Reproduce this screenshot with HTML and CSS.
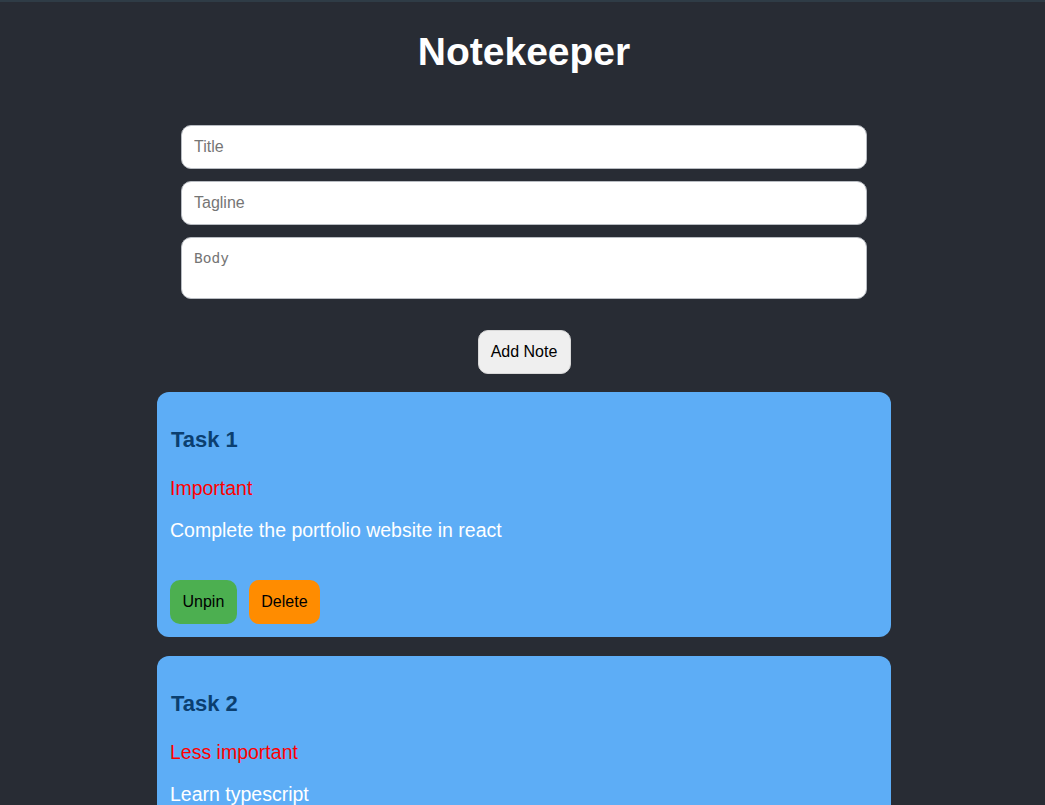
FILE: index.html
```html
<!DOCTYPE html>
<html>
<head>
<meta charset="utf-8">
<title>Notekeeper</title>
<link rel="stylesheet" href="styles.css">
</head>
<body>
<div class="app">
  <h1 class="app-title">Notekeeper</h1>
  <form class="note-form">
    <input class="field" type="text" placeholder="Title">
    <input class="field" type="text" placeholder="Tagline">
    <textarea class="field field-body" placeholder="Body"></textarea>
    <button class="btn btn-add" type="button">Add Note</button>
  </form>
  <div class="notes">
    <div class="note">
      <h3 class="note-title">Task 1</h3>
      <p class="note-tag">Important</p>
      <p class="note-body">Complete the portfolio website in react</p>
      <div class="note-actions">
        <button class="btn btn-pin" type="button">Unpin</button>
        <button class="btn btn-delete" type="button">Delete</button>
      </div>
    </div>
    <div class="note">
      <h3 class="note-title">Task 2</h3>
      <p class="note-tag">Less important</p>
      <p class="note-body">Learn typescript</p>
      <div class="note-actions">
        <button class="btn btn-pin" type="button">Pin</button>
        <button class="btn btn-delete" type="button">Delete</button>
      </div>
    </div>
  </div>
</div>
</body>
</html>
```
FILE: styles.css
```css
html, body {
  margin: 0;
  padding: 0;
  background: #282c34;
}
html {
  overflow: hidden;
}
body {
  font-family: "Liberation Sans", Arial, sans-serif;
  border-top: 2px solid #2f3c46;
}
.app {
  display: flex;
  flex-direction: column;
  align-items: center;
  padding-left: 3px;
}
.app-title {
  margin: 27px 0 0;
  font-size: 39px;
  line-height: 46px;
  font-weight: bold;
  color: #ffffff;
}
.note-form {
  width: 686px;
  margin-top: 50px;
  display: flex;
  flex-direction: column;
  align-items: center;
}
.field {
  box-sizing: border-box;
  width: 100%;
  height: 44px;
  margin: 0 0 12px;
  padding: 0 12px;
  border: 1px solid #b8bcc2;
  border-radius: 10px;
  background: #ffffff;
  font-family: "Liberation Sans", Arial, sans-serif;
  font-size: 16px;
  outline: none;
}
.field::placeholder {
  color: #757575;
}
.field-body {
  height: 62px;
  margin-bottom: 0;
  padding: 12px 12px;
  font-family: "DejaVu Sans Mono", monospace;
  font-size: 14.5px;
  resize: none;
}
.btn {
  box-sizing: border-box;
  height: 44px;
  border: none;
  border-radius: 10px;
  padding: 0 12.5px;
  font-family: "Liberation Sans", Arial, sans-serif;
  font-size: 16px;
  line-height: 20px;
  color: #000000;
  cursor: pointer;
}
.btn-add {
  margin-top: 31px;
  background: #efefef;
  border: 1px solid #d8d8d8;
  padding: 0 12px;
  width: 93px;
}
.notes {
  width: 734px;
  margin-top: 18px;
  display: flex;
  flex-direction: column;
  gap: 19px;
}
.note {
  background: #5dadf6;
  border-radius: 12px;
  padding: 14px 13px 13px;
}
.note-title {
  margin: 21px 0 0 1px;
  font-size: 22px;
  line-height: 26px;
  color: #0b3f70;
}
.note-tag {
  margin: 24px 0 0;
  font-size: 19.5px;
  line-height: 23px;
  color: #ff0000;
}
.note-body {
  margin: 19px 0 0;
  font-size: 19.5px;
  line-height: 23px;
  color: #ffffff;
}
.note-actions {
  margin-top: 38px;
  display: flex;
  gap: 12px;
}
.btn-pin {
  background: #4caf50;
}
.btn-delete {
  background: #ff8c00;
}
```
